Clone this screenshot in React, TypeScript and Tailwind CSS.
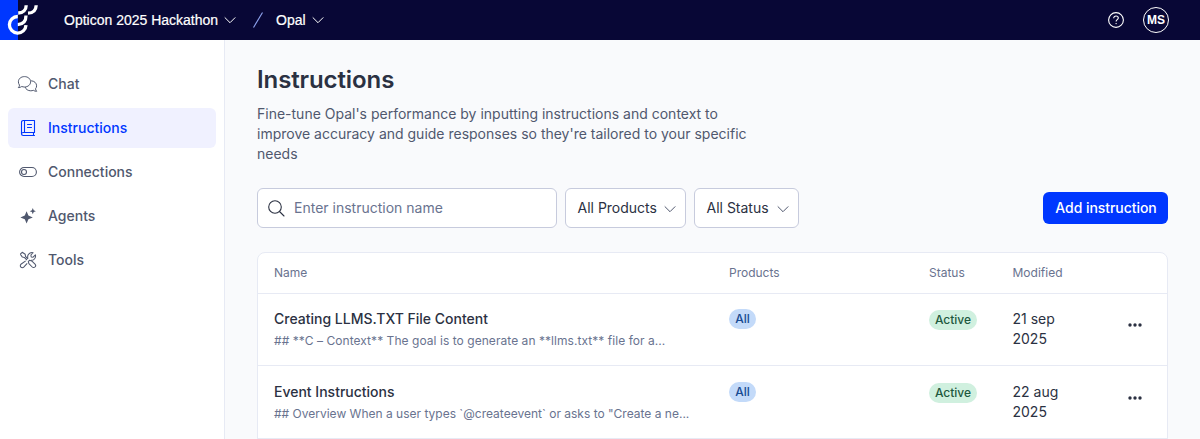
import type { ReactNode } from "react";

const FONT = "font-['Inter','Liberation_Sans',sans-serif]";

function Logo() {
  return (
    <svg width="40" height="40" viewBox="0 0 40 40" fill="none" stroke="#fff" strokeWidth="3.3">
      <path d="M17.8 16.500A8.300 8.300 0 1 0 26 25.200" />
      <path d="M26 15.600C26 21 23.300 24.400 17.800 24.600" />
      <path d="M26.200 5.200C26.200 9.900 23.200 12.800 18.200 13" />
      <path d="M36.200 5.200C36 10 33.200 13 28 13.200" />
    </svg>
  );
}

function Chevron({ className = "" }: { className?: string }) {
  return (
    <svg width="12" height="12" viewBox="0 0 12 12" fill="none" stroke="currentColor" strokeLinecap="round" strokeLinejoin="round" className={className}>
      <path d="M1 3.700l5 5 5-5" />
    </svg>
  );
}

function ChatIcon() {
  return (
    <svg width="22" height="18" viewBox="0 0 22 18" fill="none" stroke="currentColor" strokeWidth="1" strokeLinejoin="round">
      <path d="M1.300 12.600c.8-.7 1.200-1.600 1.200-2.500A5.300 5.300 0 0 1 1.400 6.800C1.400 3.700 4.100 1.600 7.500 1.600s6.100 2.200 6.100 5.200-2.700 5.200-6.100 5.200c-1 0-1.900-.2-2.700-.5-1 .7-2.200 1.100-3.500 1.100z" />
      <path d="M14.100 5.800c3.100.1 5.500 2.200 5.500 5 0 1.200-.4 2.200-1.100 3 .1.900.5 1.800 1.200 2.500-1.300 0-2.400-.3-3.400-1-.8.3-1.600.5-2.500.5-2.800 0-5.100-1.500-5.700-3.800" />
    </svg>
  );
}

function BookIcon() {
  return (
    <svg width="16" height="18" viewBox="0 0 16 18" fill="none" stroke="currentColor" strokeWidth="1.100" strokeLinecap="round" strokeLinejoin="round">
      <path d="M14.500 13.500v-12H3.200A1.700 1.700 0 0 0 1.500 3.200v11.600c0 1 .8 1.700 1.700 1.700H14.500M14.500 13.500H3.200c-1 0-1.700.6-1.700 1.400M13.500 13.500v3M4.500 1.500v12M7.500 5.500h4M7.500 8.500h4" />
    </svg>
  );
}

function ToggleIcon() {
  return (
    <svg width="18" height="12" viewBox="0 0 18 12" fill="none" stroke="currentColor" strokeWidth="1.100">
      <rect x=".6" y="1.500" width="16.800" height="9" rx="4.500" />
      <circle cx="5" cy="6" r="2.500" />
    </svg>
  );
}

function SparkIcon() {
  return (
    <svg width="16" height="16" viewBox="0 0 16 16" fill="currentColor">
      <path d="M6.600 3.200L8.400 7.600 12.800 9.400 8.400 11.200 6.600 15.600 4.800 11.200.4 9.400 4.800 7.600z" />
      <path d="M12.800.1L13.700 2.300 15.900 3.200 13.700 4.100 12.800 6.300 11.900 4.100 9.700 3.200 11.900 2.300z" />
    </svg>
  );
}

function ToolsIcon() {
  return (
    <svg width="18" height="18" viewBox="0 0 18 18" fill="none" stroke="currentColor" strokeWidth="1.050" strokeLinejoin="round">
      <path d="M1.300 3.200 3.200 1.300 6.200 3.300 6.500 5.300 9 7.800M1.300 3.200 3.400 6.100 5.300 6.400 8 9" />
      <path d="M10.600 9.200 12.700 9.900 16 13.200a1.900 1.900 0 0 1-2.800 2.800L9.900 12.700 9.300 10.600z" />
      <path d="M6.700 9.900 1.900 13.300a1.900 1.900 0 0 0 2.800 2.800L8.200 12.300M8.900 7.500C8.300 5.300 9 3.200 10.700 2.200c1-.6 2.200-.8 3.400-.5L11.900 4l.3 1.900 1.900.3 2.300-2.300c.4 1.900-.1 3.700-1.600 4.700-.9.600-1.800.7-2.800.6" />
    </svg>
  );
}

function NavItem({ icon, label, active }: { icon: ReactNode; label: string; active?: boolean }) {
  return (
    <a className={`flex h-10 items-center rounded-md pl-2 text-sm font-medium ${active ? "bg-[#f0f1ff] text-[#0037ff]" : "text-[#50586e]"}`}>
      <span className="flex w-6 justify-center">{icon}</span>
      <span className="ml-2">{label}</span>
    </a>
  );
}

function Select({ label, width }: { label: string; width: string }) {
  return (
    <button className={`flex h-10 items-center justify-between rounded-md border border-[#c7cbdd] bg-white pr-[9px] pl-[11.5px] text-sm text-[#2b3142] ${width}`}>
      {label}
      <Chevron className="mt-0.5 text-[#50586e]" />
    </button>
  );
}

const COLUMNS = "grid grid-cols-[455px_200px_83.5px_1fr] pl-4";

const rows = [
  { name: "Creating LLMS.TXT File Content", text: "## **C – Context** The goal is to generate an **llms.txt** file for a...", day: "21 sep", year: "2025", size: "h-[71px]", tracking: "tracking-[0.05px]" },
  { name: "Event Instructions", text: "## Overview When a user types `@createevent` or asks to \"Create a ne...", day: "22 aug", year: "2025", size: "h-[71px] pt-px", tracking: "" },
];

export default function App() {
  return (
    <div className={`flex h-[439px] w-[1200px] flex-col overflow-hidden bg-[#f9fafc] ${FONT}`}>
      <header className="flex h-10 shrink-0 items-center bg-[#080736] text-white">
        <div className="h-10 w-16 bg-[linear-gradient(to_right,#0037ff_18px,#080736_18px)]">
          <Logo />
        </div>
        <span className="font-['Liberation_Sans',sans-serif] text-[14px] [-webkit-text-stroke:0.2px_white]">Opticon 2025 Hackathon</span>
        <Chevron className="ml-1.5" />
        <svg width="10" height="16" viewBox="0 0 10 16" stroke="#8fa4ef" strokeWidth="1.100" className="ml-[17px]">
          <path d="M.5 15.500 9.500.5" />
        </svg>
        <span className="ml-[13px] font-['Liberation_Sans',sans-serif] text-[14px] [-webkit-text-stroke:0.2px_white]">Opal</span>
        <Chevron className="ml-1.5" />
        <svg width="16" height="16" viewBox="0 0 16 16" fill="none" stroke="#fff" strokeWidth="1.100" className="mr-[19px] ml-auto">
          <circle cx="8" cy="8" r="7.400" />
          <path d="M5.700 6.200c0-1.300 1-2.200 2.300-2.200s2.300.8 2.300 2c0 1.700-2.200 1.600-2.200 3.400" />
          <circle cx="8.100" cy="11.600" r=".7" fill="#fff" stroke="none" />
        </svg>
        <div className="mr-[31px] flex size-[26px] items-center justify-center rounded-full border border-white font-['Liberation_Sans',sans-serif] text-xs font-bold">MS</div>
      </header>
      <div className="flex min-h-0 flex-1">
        <aside className="w-[225px] shrink-0 border-r border-[#e7eaf4] bg-white pt-6 pr-2 pl-2">
          <nav className="flex flex-col gap-1">
            <NavItem icon={<ChatIcon />} label="Chat" />
            <NavItem icon={<BookIcon />} label="Instructions" active />
            <NavItem icon={<ToggleIcon />} label="Connections" />
            <NavItem icon={<SparkIcon />} label="Agents" />
            <NavItem icon={<ToolsIcon />} label="Tools" />
          </nav>
        </aside>
        <main className="flex-1 px-8 pt-6">
          <h1 className="text-2xl leading-8 font-semibold tracking-[-0.1px] text-[#2b3142]">Instructions</h1>
          <p className="mt-2 w-[500px] text-sm leading-5 text-[#50586e]">
            Fine-tune Opal's performance by inputting instructions and context to improve accuracy and guide responses so they're tailored to your specific needs
          </p>
          <div className="mt-6 flex items-center">
            <div className="mr-2 flex h-10 w-[300px] items-center rounded-md border border-[#c7cbdd] bg-white pl-2.5 text-sm text-[#69738f]">
              <svg width="17" height="17" viewBox="0 0 17 17" fill="none" stroke="#2b3142" strokeWidth="1.100" strokeLinecap="round" className="mr-[9px]">
                <circle cx="7" cy="7" r="6.300" />
                <path d="m11.500 11.500 4.500 4.500" />
              </svg>
              Enter instruction name
            </div>
            <Select label="All Products" width="w-[121px] mr-2" />
            <Select label="All Status" width="w-[105px]" />
            <button className="ml-auto h-8 w-[125px] rounded-md bg-[#0037ff] pl-px text-sm font-medium tracking-[-0.05px] text-white">Add instruction</button>
          </div>
          <section className="mt-6 w-[911px] rounded-lg border border-[#e7eaf4] bg-white">
            <div className={`${COLUMNS} h-10 items-center text-xs text-[#69738f]`}>
              <span>Name</span>
              <span>Products</span>
              <span>Status</span>
              <span>Modified</span>
            </div>
            {rows.map((row) => (
              <div key={row.name} className={`${COLUMNS} ${row.size} box-content border-t border-[#e7eaf4] text-sm leading-5 text-[#2b3142]`}>
                <div className="pt-[15px]">
                  <div className="font-medium">{row.name}</div>
                  <div className={`mt-0.5 text-xs leading-5 text-[#69738f] ${row.tracking}`}>{row.text}</div>
                </div>
                <div className="pt-[15px]">
                  <span className="flex h-5 w-[27px] items-center justify-center rounded-full bg-[#c3daf9] text-xs font-medium text-[#174a91]">All</span>
                </div>
                <div className="pt-4">
                  <span className="flex h-5 w-12 items-center justify-center rounded-full bg-[#d0f0df] text-xs font-medium text-[#1e5940]">Active</span>
                </div>
                <div className="flex pt-[15px]">
                  <div className="w-[114.5px]">
                    <div>{row.day}</div>
                    <div>{row.year}</div>
                  </div>
                  <svg width="16" height="4" viewBox="0 0 16 4" fill="#2b3142" className="mt-3.5">
                    <circle cx="3" cy="2" r="1.700" />
                    <circle cx="8" cy="2" r="1.700" />
                    <circle cx="13" cy="2" r="1.700" />
                  </svg>
                </div>
              </div>
            ))}
            <div className="h-2 border-t border-[#e7eaf4]" />
          </section>
        </main>
      </div>
    </div>
  );
}
